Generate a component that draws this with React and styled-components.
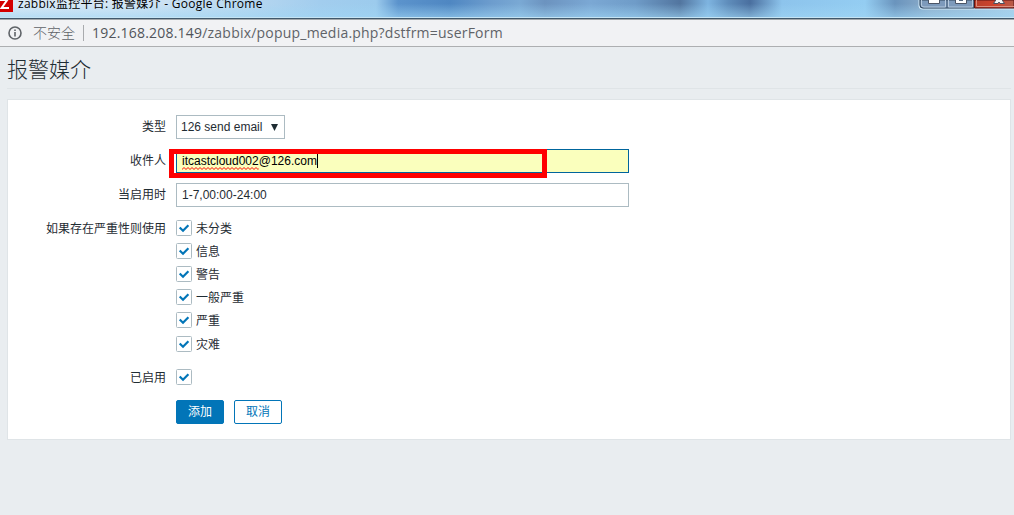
import React from "react";
import styled, { createGlobalStyle } from "styled-components";

const GlobalStyle = createGlobalStyle`
  * { box-sizing: border-box; }
  body {
    margin: 0;
    background: #e9edf0;
    color: #1f2c33;
    font: 12px/24px "Liberation Sans", "Noto Sans CJK SC", sans-serif;
    overflow: hidden;
  }
`;

const Window = styled.div`
  height: 515px;
  display: flex;
  flex-direction: column;
  overflow: hidden;
`;

const TitleBar = styled.header`
  flex: none;
  height: 20px;
  display: flex;
  align-items: flex-start;
  border-bottom: 1px solid #a3a8ab;
  box-shadow: inset 0 -1px #40586b, inset 0 -2px #c5e4f4;
  background:
    linear-gradient(180deg, transparent 20%, rgba(160, 214, 244, 0.6) 90%),
    linear-gradient(90deg, #dceaf5 0, #d3e5f4 130px, #b9d8f0 240px, #a2cdee 320px, #9ccbed 376px,
      #5b93cc 398px, #4f87c2 450px, #6c9ccd 490px, #7aa9d4 520px, #6c93bf 545px, #7ba8d4 590px, #6f9cc8 635px, #52759f 680px,
      #7eb4e0 708px, #5f8dbb 728px, #4a6f9f 750px, #8dc4ec 782px, #94cdf2 865px, #6a94bd 895px, #8eaecb 930px, #a9cfe8 1014px);
`;

const Favicon = styled.svg`
  flex: none;
  width: 13px;
  height: 12px;
`;

const WindowTitle = styled.div`
  flex: 1;
  margin: -8px 0 0 5px;
  height: 24px;
  color: #000;
  font: 12px/24px "Open Sans", "Noto Sans CJK SC", sans-serif;
  letter-spacing: 0.27px;
  white-space: nowrap;
`;

const Controls = styled.svg`
  flex: none;
  width: 96px;
  height: 11px;
`;

const AddressBar = styled.div`
  flex: none;
  height: 27px;
  display: flex;
  align-items: center;
  background: #f1f2f4;
  border-bottom: 1px solid #adafb1;
  padding-left: 8px;
  font: 14px/26px "Open Sans", "Noto Sans CJK SC", sans-serif;
  color: #5f6368;
  white-space: nowrap;
`;

const InfoIcon = styled.svg`
  width: 14px;
  height: 14px;
  margin-right: 11px;
`;

const Security = styled.span`
  font-weight: 300;
`;

const Divider = styled.span`
  width: 1px;
  height: 16px;
  margin: 0 8px;
  background: #a9abae;
`;

const Url = styled.span`
  letter-spacing: 0.21px;
`;

const Host = styled.span`
  color: #50545a;
`;

const Page = styled.main`
  padding: 0 3px 0 7px;
`;

const Heading = styled.h1`
  margin: 0 0 10px;
  height: 42px;
  border-bottom: 1px solid #dfe4e7;
  font-size: 21px;
  line-height: 45px;
  font-weight: 300;
`;

const Panel = styled.form`
  height: 341px;
  padding-top: 15px;
  border: 1px solid #dfe4e7;
  background: #fff;
`;

const Row = styled.div`
  display: flex;
  align-items: flex-start;
  margin-bottom: ${(p) => p.$gap ?? 10}px;
`;

const Label = styled.label`
  width: 158px;
  margin-right: 10px;
  text-align: right;
  line-height: 24px;
`;

const Select = styled.div`
  width: 109px;
  height: 24px;
  display: flex;
  justify-content: space-between;
  align-items: center;
  padding: 0 6px 0 4px;
  border: 1px solid #acbbc2;
  line-height: 22px;
`;

const Arrow = styled.svg`
  width: 7px;
  height: 7px;
`;

const Field = styled.div`
  position: relative;
  width: 453px;
  height: 24px;
  padding-left: 5px;
  line-height: 22px;
  border: 1px solid ${(p) => (p.$focused ? "#00659c" : "#acbbc2")};
  background: ${(p) => (p.$focused ? "#faffbd" : "#fff")};
  color: ${(p) => (p.$focused ? "#000" : "#1f2c33")};
`;

const Misspelled = styled.span`
  position: relative;
`;

const Squiggle = styled.svg`
  position: absolute;
  left: 0;
  bottom: -2px;
  width: 100%;
  height: 3px;
`;

const Caret = styled.span`
  display: inline-block;
  width: 1px;
  height: 14px;
  vertical-align: -3px;
  background: #000;
`;

const Highlight = styled.div`
  position: absolute;
  left: -8px;
  top: -1px;
  width: 378px;
  height: 29px;
  border: 5px solid #f00;
`;

const CheckList = styled.div`
  display: flex;
  flex-direction: column;
  gap: 7px;
  padding-top: 3px;
`;

const CheckItem = styled.label`
  height: 16px;
  display: flex;
  align-items: center;
  gap: 4px;
  line-height: 16px;
  &:nth-child(6) { margin-top: 1px; }
`;

const CheckText = styled.span`
  padding-top: 2px;
`;

const CheckBox = styled.svg`
  flex: none;
  width: 16px;
  height: 16px;
`;

const Actions = styled.div`
  display: flex;
  gap: 10px;
  padding-left: 168px;
`;

const Button = styled.button`
  width: 48px;
  height: 24px;
  padding: 1px 0 0;
  border: 1px solid #0275b8;
  border-radius: 2px;
  background: ${(p) => (p.$primary ? "#0275b8" : "#fff")};
  color: ${(p) => (p.$primary ? "#fff" : "#0275b8")};
  font: inherit;
  line-height: 21px;
`;

const Checked = () => (
  <CheckBox viewBox="0 0 16 16">
    <rect x="0.5" y="0.5" width="15" height="15" rx="1" fill="#fff" stroke="#acbbc2" />
    <path d="M3.7 7.5 L7 10.7 L12.4 5.2" fill="none" stroke="#0275b8" strokeWidth="2.2" />
  </CheckBox>
);

const severities = ["未分类", "信息", "警告", "一般严重", "严重", "灾难"];

export default function App() {
  return (
    <Window>
      <GlobalStyle />
      <TitleBar>
        <Favicon viewBox="0 0 13 12">
          <path d="M0 0H13V12H0Z" fill="#d40000" />
          <path d="M0 0H7.2L1.6 8H9" fill="none" stroke="#fff" strokeWidth="2" />
        </Favicon>
        <WindowTitle>zabbix监控平台: 报警媒介 - Google Chrome</WindowTitle>
        <Controls viewBox="0 0 96 11">
          <defs>
            <linearGradient id="close" x1="0" x2="1">
              <stop offset="0" stopColor="#b8402c" />
              <stop offset=".5" stopColor="#cf432c" />
              <stop offset="1" stopColor="#b65b49" />
            </linearGradient>
          </defs>
          <path d="M1 0V6Q1 9 4 9H96" fill="none" stroke="#d5ebf8" />
          <path d="M2 0V5Q2 8 5 8H56V0Z" fill="#7d9abb" stroke="#33465c" />
          <path d="M56.5 0V8H96V0Z" fill="url(#close)" stroke="#5b1515" />
          <path d="M3.5 0V5Q3.5 7 6 7H27.5V0M30.5 0V7H54.5V0" fill="none" stroke="#b6cade" />
          <path d="M58.5 0V6.5H96" fill="none" stroke="#dc8d7d" />
          <path d="M29 0V8" stroke="#465c75" />
          <path d="M10.5 -1V3.5H21.5V-1Z" fill="#fff" stroke="#4c5566" />
          <path d="M37.5 -1V3.5H48.5V-1Z" fill="#fff" stroke="#4c5566" />
          <path d="M41 0H45V1H41Z" fill="#52657d" />
          <path d="M75.5 3.5H80L81 2L82 3.5H86.5L83.5 -1H78.5Z" fill="#f6f6f6" stroke="#4b5160" />
        </Controls>
      </TitleBar>
      <AddressBar>
        <InfoIcon viewBox="0 0 14 14">
          <circle cx="7" cy="7" r="6" fill="none" stroke="#5f6368" strokeWidth="1.6" />
          <path d="M7 6V10.5M7 3.4V5" stroke="#5f6368" strokeWidth="1.6" />
        </InfoIcon>
        <Security>不安全</Security>
        <Divider />
        <Url><Host>192.168.208.149</Host>/zabbix/popup_media.php?dstfrm=userForm</Url>
      </AddressBar>
      <Page>
        <Heading>报警媒介</Heading>
        <Panel>
          <Row>
            <Label>类型</Label>
            <Select>
              126 send email
              <Arrow viewBox="0 0 7 7"><path d="M0 0H7L3.5 7Z" fill="#1f2c33" /></Arrow>
            </Select>
          </Row>
          <Row>
            <Label>收件人</Label>
            <Field $focused>
              <Misspelled>
                itcastcloud002
                <Squiggle>
                  <defs>
                    <pattern id="squiggle" width="4" height="3" patternUnits="userSpaceOnUse">
                      <path d="M-1 1.5L0 2.5L2 0.5L4 2.5L5 1.5" fill="none" stroke="#f00" />
                    </pattern>
                  </defs>
                  <rect width="100%" height="3" fill="url(#squiggle)" />
                </Squiggle>
              </Misspelled>
              @126.com<Caret />
              <Highlight />
            </Field>
          </Row>
          <Row>
            <Label>当启用时</Label>
            <Field>1-7,00:00-24:00</Field>
          </Row>
          <Row $gap={14}>
            <Label>如果存在严重性则使用</Label>
            <CheckList>
              {severities.map((name) => (
                <CheckItem key={name}><Checked /><CheckText>{name}</CheckText></CheckItem>
              ))}
            </CheckList>
          </Row>
          <Row>
            <Label>已启用</Label>
            <CheckList><CheckItem><Checked /></CheckItem></CheckList>
          </Row>
          <Actions>
            <Button type="button" $primary>添加</Button>
            <Button type="button">取消</Button>
          </Actions>
        </Panel>
      </Page>
    </Window>
  );
}
